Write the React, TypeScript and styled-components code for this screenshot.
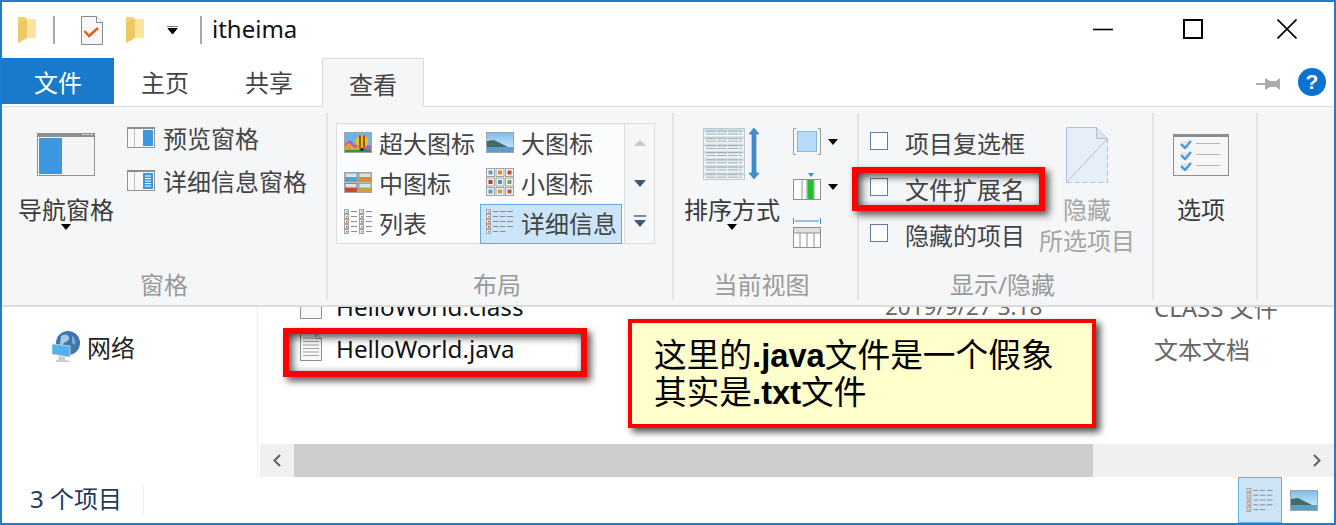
import React from "react";
import styled, { createGlobalStyle } from "styled-components";

const GlobalStyle = createGlobalStyle`
  html, body { margin: 0; padding: 0; background: #fff; overflow: hidden; }
  body { font-family: "Noto Sans", "Noto Sans CJK SC", sans-serif; }
  * { box-sizing: border-box; }
`;

const CJK = `"Noto Sans", "Noto Sans CJK SC", sans-serif`;

/* ---------- small drawings ---------- */

const Folder = () => (
  <svg width="20" height="28" viewBox="0 0 20 28">
    <path d="M1 1h7l2 2v18l-9 6z" fill="#f3d266" />
    <path d="M1 6l9-3h9v19H10l-9 5z" fill="#fbe59c" />
    <path d="M1 27l9-5V3L1 6z" fill="#eec862" />
  </svg>
);

const Checklist = () => (
  <svg width="22" height="29" viewBox="0 0 22 29">
    <path d="M.5.5h15l6 6v22H.5z" fill="#f6f6f6" stroke="#8a8a8a" />
    <path d="M15.5.5v6h6" fill="#fff" stroke="#8a8a8a" />
    <path d="M3.5 15l4.5 5 9-8" fill="none" stroke="#e8591c" strokeWidth="2.4" />
  </svg>
);

const SmallArrow = ({ w = 11, h = 8 }: { w?: number; h?: number }) => (
  <svg width={w} height={h} viewBox="0 0 11 8">
    <path d="M0 0h11M1 2.5h9L5.5 8z" stroke="#000" fill="#000" strokeWidth="1" />
  </svg>
);

const Caret = () => (
  <svg width="10" height="6" viewBox="0 0 10 6">
    <path d="M0 0h10L5 6z" fill="#000" />
  </svg>
);

const WindowGlyph = ({ kind }: { kind: "min" | "max" | "close" }) => (
  <svg width="20" height="20" viewBox="0 0 20 20">
    {kind === "min" && <path d="M0 10.5h20" stroke="#000" strokeWidth="1.6" />}
    {kind === "max" && <rect x="1" y="1" width="18" height="18" fill="none" stroke="#000" strokeWidth="2" />}
    {kind === "close" && <path d="M.5.5l19 19M19.5.5l-19 19" stroke="#000" strokeWidth="1.6" />}
  </svg>
);

const Pin = () => (
  <svg width="25" height="14" viewBox="0 0 25 14">
    <path d="M0 6h10v2H0z" fill="#a7adb1" />
    <path d="M9 1l5 3h6l4-3v12l-4-3h-6l-5 3z" fill="#a7adb1" />
  </svg>
);

const NavPaneIcon = () => (
  <svg width="58" height="43" viewBox="0 0 58 43">
    <rect x=".5" y=".5" width="57" height="42" fill="#f4f4f4" stroke="#939393" />
    <rect x="0" y="0" width="58" height="4" fill="#8e8e8e" />
    <path d="M45 1.5h3M49 1.5h3M53 1.5h3" stroke="#ddd" />
    <rect x="2" y="5" width="23" height="36" fill="#3d97e0" />
  </svg>
);

const SidePaneIcon = ({ lines }: { lines?: boolean }) => (
  <svg width="28" height="21" viewBox="0 0 28 21">
    <rect x=".5" y=".5" width="27" height="20" fill="#f8f8f8" stroke="#939393" />
    <rect x="0" y="0" width="28" height="2" fill="#8e8e8e" />
    <path d="M7.5 2v18" stroke="#bdbdbd" />
    <rect x="16" y="3" width="10" height="16" fill="#3d97e0" />
    {lines && <path d="M18 6h6M18 8.5h6M18 11h6M18 13.5h6M18 16h6" stroke="#fff" />}
  </svg>
);

const Balloon = () => (
  <svg width="28" height="21" viewBox="0 0 28 21">
    <rect x=".5" y=".5" width="27" height="20" fill="#6fb2e8" stroke="#a3a3a3" />
    <path d="M1 20V12l5-4 5 5 5-3 11 4v6z" fill="#b05fc0" />
    <path d="M1 14l4-3 6 5 4-2v6H1z" fill="#e2a13c" />
    <rect x="1" y="18" width="26" height="2" fill="#2b9a3c" />
    <circle cx="18" cy="9.5" r="6.5" fill="#e8c11c" />
    <path d="M16 3.5v12M20 3.5v12" stroke="#7a2410" strokeWidth="1.4" />
    <path d="M16.5 16h3v3h-3z" fill="#3a2410" />
  </svg>
);

const Landscape = () => (
  <svg width="28" height="21" viewBox="0 0 28 21">
    <defs>
      <linearGradient id="sky" x1="0" y1="0" x2="0" y2="1">
        <stop offset="0" stopColor="#7dbdea" />
        <stop offset="1" stopColor="#dff0fb" />
      </linearGradient>
    </defs>
    <rect x=".5" y=".5" width="27" height="20" fill="url(#sky)" stroke="#a3a3a3" />
    <path d="M1 9l7-1 6 3 8 4h5v1H1z" fill="#3e6e63" />
    <rect x="1" y="15" width="26" height="5" fill="#5a9ccb" />
  </svg>
);

const thumbColors = ["#5f9fc0", "#d98b3a", "#c84a2c", "#c23a2a", "#4f97c6", "#78a85a", "#5c9acb", "#c9a03c", "#d2502f"];

const MediumGrid = () => (
  <svg width="28" height="21" viewBox="0 0 28 21">
    {[0, 1, 2, 3].map((i) => (
      <g key={i} transform={`translate(${i % 2 ? 14.5 : 0.5} ${i > 1 ? 11 : 0.5})`}>
        <rect width="13" height="9.5" fill={thumbColors[[0, 1, 2, 7][i]]} stroke="#a3a3a3" />
        <rect x="1" y="1" width="11" height="3.5" fill="#cfe6f5" />
      </g>
    ))}
  </svg>
);

const SmallGrid = () => (
  <svg width="28" height="28" viewBox="0 0 28 28">
    {thumbColors.map((c, i) => (
      <g key={i} transform={`translate(${0.5 + (i % 3) * 9.5} ${0.5 + Math.floor(i / 3) * 9.5})`}>
        <rect width="8" height="8" fill="#eef3f6" stroke="#a3a3a3" />
        <rect x="2" y="2" width="4" height="4" fill={c} />
      </g>
    ))}
  </svg>
);

const ListIcon = () => (
  <svg width="28" height="26" viewBox="0 0 28 26">
    {[0, 1].map((col) =>
      [0, 1, 2, 3, 4].map((r) => (
        <g key={`${col}-${r}`} transform={`translate(${col * 15} ${r * 5})`}>
          <rect x=".5" y=".5" width="4" height="4" fill="#f3f3f3" stroke="#a3a3a3" />
          <rect x="2" y="2" width="1.5" height="1.5" fill={thumbColors[(r + col) % 9]} />
          <path d="M7 2.5h6" stroke="#8c8c8c" />
        </g>
      ))
    )}
  </svg>
);

const DetailsIcon = ({ h = 26 }: { h?: number }) => (
  <svg width="28" height={h} viewBox="0 0 28 26">
    {[0, 1, 2, 3, 4].map((r) => (
      <g key={r} transform={`translate(0 ${r * 5})`}>
        <rect x=".5" y=".5" width="4" height="4" fill="#f3f3f3" stroke="#a3a3a3" />
        <rect x="2" y="2" width="1.5" height="1.5" fill={thumbColors[r]} />
        {r < 4 && <path d="M7 2.5h5.5M14 2.5h5.5M21 2.5h6" stroke="#8c8c8c" />}
        {r === 4 && <path d="M7 2.5h5.5M14 2.5h5.5" stroke="#8c8c8c" />}
      </g>
    ))}
  </svg>
);

const SortIcon = () => (
  <svg width="58" height="54" viewBox="0 0 58 54">
    <rect x=".5" y=".5" width="41" height="51" fill="#f4f7f8" stroke="#b7c9d2" />
    {[0, 1, 2, 3, 4, 5, 6].map((i) => (
      <g key={i}>
        <rect x="1" y={1 + i * 7.2} width="40" height="3.5" fill="#cfe3ee" />
        <path d={`M3 ${6 + i * 7.2}h36M3 ${3 + i * 7.2}h36`} stroke="#a6a6a6" strokeDasharray="10 1" />
      </g>
    ))}
    <path d="M51 0l5 6h-3v39h3l-5 6-5-6h3V6h-3z" fill="#3f8fd2" stroke="#2b74b2" strokeWidth=".6" />
  </svg>
);

const GroupByIcon = () => (
  <svg width="28" height="27" viewBox="0 0 28 27">
    <path d="M15 0h6l-3 4z" fill="#3f8fd2" />
    <rect x=".5" y="6.5" width="27" height="20" fill="#fff" stroke="#8f8f8f" />
    <path d="M9 7v19M14 7v19M21 7v19" stroke="#8f8f8f" />
    <rect x="14.5" y="7" width="6" height="19" fill="#21c02c" />
  </svg>
);

const PreviewIcon = () => (
  <svg width="28" height="27" viewBox="0 0 28 27">
    <path d="M3 .5H.5v26H3M25 .5h2.5v26H25" fill="none" stroke="#9a9a9a" />
    <rect x="4.5" y="3.5" width="19" height="20" fill="#b7dcfb" stroke="#86b8e2" />
  </svg>
);

const ColumnsIcon = () => (
  <svg width="28" height="30" viewBox="0 0 28 30">
    <path d="M.5 0v6M27.5 0v6M2 3h24" stroke="#3f8fd2" />
    <rect x=".5" y="9.5" width="27" height="20" fill="#fff" stroke="#8f8f8f" />
    <rect x="1" y="10" width="26" height="5" fill="#dedede" />
    <path d="M7 15v14M14 15v14M21 15v14M1 15h26" stroke="#8f8f8f" />
  </svg>
);

const HideIcon = () => (
  <svg width="42" height="56" viewBox="0 0 42 56">
    <path d="M.5.5h30l11 11v44H.5z" fill="#e6eef9" />
    <path d="M41.5 11.5v44H.5" fill="none" stroke="#b3bfd0" strokeDasharray="5 3" />
    <path d="M.5 55.5V.5h30l11 11L.5 55.5" fill="none" stroke="#b3bfd0" />
    <path d="M30.5.5v11h11" fill="#dbe5f2" stroke="#b3bfd0" />
  </svg>
);

const OptionsIcon = () => (
  <svg width="56" height="42" viewBox="0 0 56 42">
    <rect x=".5" y=".5" width="55" height="41" fill="#f6f6f6" stroke="#8e8e8e" />
    <rect width="56" height="3" fill="#8e8e8e" />
    {[0, 1, 2].map((i) => (
      <g key={i} transform={`translate(0 ${i * 11})`}>
        <rect x="8" y="7" width="8" height="8" fill="#e6e6e6" />
        <path d="M8 10l4 4 6-7" fill="none" stroke="#3d97e0" strokeWidth="2.2" />
        <path d="M23 9.5h24" stroke="#b5b5b5" />
      </g>
    ))}
  </svg>
);

const NetworkIcon = () => (
  <svg width="28" height="32" viewBox="0 0 28 32">
    <circle cx="16" cy="12" r="12" fill="#3f76ad" />
    <path d="M9 5c5-3 9 0 8 3s-6 3-6 6-3 2-3-1z" fill="#a9cbe6" />
    <path d="M20 5c3 1 4 6 3 9l-3-2z" fill="#7fa9cc" />
    <path d="M0 13l18 2v11L0 23z" fill="#52b2ee" stroke="#c5c9cc" />
    <path d="M6 25l7 1v3l5 1v1H4v-2l3-1z" fill="#c9cdd0" />
  </svg>
);

const DocumentIcon = ({ plain }: { plain?: boolean }) => (
  <svg width="22" height="29" viewBox="0 0 22 29">
    <path d="M.5.5h15l6 6v22H.5z" fill="#f8f8f8" stroke="#8f8f8f" />
    <path d="M15.5.5v6h6" fill="#e4e4e4" stroke="#8f8f8f" />
    {!plain && (
      <path d="M3 6h11M3 9.5h16M3 13h16M3 16.5h16M3 20h16M3 23.5h16" stroke="#a3a3a3" />
    )}
  </svg>
);

const ScrollChevron = ({ right }: { right?: boolean }) => (
  <svg width="8" height="13" viewBox="0 0 8 13">
    <path d={right ? "M1 1l5.5 5.5L1 12" : "M7 1L1.5 6.5 7 12"} fill="none" stroke="#606060" strokeWidth="2" />
  </svg>
);

const GalleryArrow = ({ dir, off }: { dir: "up" | "down" | "more"; off?: boolean }) => (
  <svg width="14" height="14" viewBox="0 0 14 14">
    {dir === "more" && <path d="M1 1h12" stroke="#3f5675" strokeWidth="1.4" />}
    <path
      d={dir === "up" ? "M7 3l6 6H1z" : dir === "more" ? "M1 5h12l-6 7z" : "M1 4h12l-6 7z"}
      fill={off ? "#c5cad0" : "#3f5675"}
    />
  </svg>
);

/* ---------- window frame ---------- */

const Page = styled.div`
  position: relative;
  width: 1336px;
  height: 525px;
  overflow: hidden;
`;

const Frame = styled.div`
  display: flex;
  flex-direction: column;
  width: 1336px;
  height: 525px;
  border: 2px solid #1a7fd2;
  background: #fff;
  font-family: ${CJK};
  color: #444;
`;

const TitleBar = styled.div`
  display: flex;
  align-items: center;
  height: 56px;
  flex: none;
`;

const QuickSlot = styled.div<{ $w: number; $pad: number }>`
  display: flex;
  justify-content: flex-start;
  width: ${(p) => p.$w}px;
  padding-left: ${(p) => p.$pad}px;
  flex: none;
`;

const TitleSep = styled.div`
  width: 2px;
  height: 28px;
  background: #a8a8a8;
  flex: none;
`;

const WindowTitle = styled.div`
  margin-left: 10px;
  margin-top: -3px;
  font-size: 24px;
  line-height: 30px;
  color: #111;
  flex: 1;
`;

const ControlButton = styled.div<{ $w: number }>`
  display: flex;
  justify-content: center;
  width: ${(p) => p.$w}px;
  margin-top: -3px;
  flex: none;
`;

const TabRow = styled.div`
  display: flex;
  align-items: flex-start;
  height: 49px;
  flex: none;
  border-bottom: 1px solid #dadbdc;
`;

const FileTab = styled.div`
  display: flex;
  align-items: center;
  justify-content: center;
  width: 112px;
  height: 46px;
  background: #1979ca;
  color: #fff;
  font-size: 24px;
`;

const Tab = styled.div<{ $w: number; $active?: boolean }>`
  display: flex;
  align-items: center;
  justify-content: center;
  width: ${(p) => p.$w}px;
  height: ${(p) => (p.$active ? "49px" : "46px")};
  padding-top: ${(p) => (p.$active ? "1px" : "0")};
  font-size: 24px;
  color: #444;
  ${(p) => p.$active && "background: #f5f6f7; border: 1px solid #dadbdc; border-bottom: none;"}
`;

const TabSpacer = styled.div`
  flex: 1;
`;

const HelpBadge = styled.div`
  display: flex;
  align-items: center;
  justify-content: center;
  width: 28px;
  height: 28px;
  margin: 10px 8px 0 17px;
  border-radius: 50%;
  background: #0a73d1;
  color: #fff;
  font: bold 21px "Liberation Sans", sans-serif;
`;

const PinWrap = styled.div`
  margin-top: 16px;
`;

/* ---------- ribbon ---------- */

const Ribbon = styled.div`
  display: flex;
  height: 200px;
  flex: none;
  padding: 6px 0 0;
  background: #f5f6f7;
  border-bottom: 2px solid #dcdcdc;
`;

const Group = styled.div<{ $w: number }>`
  display: flex;
  flex-direction: column;
  width: ${(p) => p.$w}px;
  height: 187px;
  flex: none;
  border-right: 2px solid #e3e4e6;
`;

const GroupBody = styled.div`
  display: flex;
  flex: 1;
  min-height: 0;
`;

const GroupLabel = styled.div<{ $nudge?: number }>`
  height: 30px;
  padding-right: ${(p) => p.$nudge ?? 0}px;
  text-align: center;
  font-size: 24px;
  line-height: 30px;
  color: #9a9a9a;
  flex: none;
`;

const BigButton = styled.div<{ $w: number; $left?: number; $muted?: boolean }>`
  display: flex;
  flex-direction: column;
  align-items: center;
  width: ${(p) => p.$w}px;
  margin-left: ${(p) => p.$left ?? 0}px;
  flex: none;
  font-size: 24px;
  line-height: 31px;
  white-space: nowrap;
  text-align: center;
  color: ${(p) => (p.$muted ? "#a5a5a5" : "#3a3a3a")};
`;

const BigIconSlot = styled.div<{ $top: number }>`
  display: flex;
  justify-content: center;
  align-items: flex-start;
  padding-top: ${(p) => p.$top}px;
  height: 81px;
  flex: none;
`;

const CaretSlot = styled.div`
  display: flex;
  justify-content: center;
  height: 6px;
  margin-top: -1px;
`;

const PaneList = styled.div`
  display: flex;
  flex-direction: column;
  gap: 17px;
  margin: 11px 0 0 5px;
`;

const PaneRow = styled.div`
  display: flex;
  align-items: center;
  gap: 8px;
  height: 26px;
  font-size: 24px;
  color: #444;
`;

const Gallery = styled.div`
  display: flex;
  width: 319px;
  height: 121px;
  margin: 10px 0 0 8px;
  border: 1px solid #dcdcdc;
  background: #fbfcfe;
`;

const GalleryGrid = styled.div`
  display: grid;
  grid-template-columns: 142px 142px;
  grid-auto-rows: 40px;
  width: 288px;
  padding-left: 1px;
  border-right: 1px solid #dcdcdc;
`;

const GalleryItem = styled.div<{ $selected?: boolean }>`
  display: flex;
  align-items: center;
  gap: 7px;
  padding: 0 0 4px 6px;
  font-size: 24px;
  white-space: nowrap;
  color: #444;
  ${(p) => p.$selected && "background: #cde5fb; border: 1px solid #68a8e2; padding-left: 5px;"}
`;

const GalleryRail = styled.div`
  display: flex;
  flex-direction: column;
  align-items: center;
  flex: 1;
  padding-top: 13px;
  gap: 25px;
  background: #f5f6f7;
`;

const SmallIconColumn = styled.div`
  display: flex;
  flex-direction: column;
  gap: 18px;
  margin: 15px 0 0 9px;
`;

const SmallIconRow = styled.div`
  display: flex;
  align-items: center;
  gap: 7px;
`;

const CheckList = styled.div`
  display: flex;
  flex-direction: column;
  margin: 5px 0 0 11px;
  width: 173px;
  flex: none;
`;

const CheckRow = styled.div`
  display: flex;
  align-items: center;
  gap: 17px;
  height: 46px;
  font-size: 24px;
  color: #444;
`;

const CheckBox = styled.span`
  width: 18px;
  height: 18px;
  background: #fff;
  border: 1px solid #5f7ba3;
  flex: none;
`;

const CheckLabel = styled.span`
  padding-top: 3px;
`;

/* ---------- file list ---------- */

const Content = styled.div`
  display: flex;
  flex: 1;
  min-height: 0;
`;

const NavPane = styled.div`
  width: 256px;
  flex: none;
  border-right: 1px solid #f0f0f0;
  padding: 22px 0 0 50px;
`;

const NavItem = styled.div`
  display: flex;
  align-items: center;
  gap: 7px;
  font-size: 24px;
  color: #222;
`;

const FilePane = styled.div`
  display: flex;
  flex-direction: column;
  flex: 1;
  min-width: 0;
  padding-left: 2px;
`;

const FileRows = styled.div`
  flex: 1;
  overflow: hidden;
`;

const FileRow = styled.div<{ $clipped?: boolean }>`
  display: flex;
  align-items: center;
  height: 42px;
  margin-top: ${(p) => (p.$clipped ? "-22px" : "0")};
  white-space: nowrap;
`;

const FileIconSlot = styled.div`
  display: flex;
  width: 76px;
  margin-top: -4px;
  padding-left: 40px;
  flex: none;
`;

const FileName = styled.div`
  width: 549px;
  font-size: 24.2px;
  color: #111;
  flex: none;
`;

const FileDate = styled.div`
  width: 269px;
  font-size: 22.5px;
  color: #666;
  flex: none;
`;

const FileType = styled.div`
  font-size: 24px;
  color: #666;
`;

const HScroll = styled.div`
  display: flex;
  height: 33px;
  flex: none;
  background: #f0f0f0;
`;

const ScrollButton = styled.div`
  display: flex;
  align-items: center;
  justify-content: center;
  width: 34px;
  flex: none;
`;

const ScrollThumb = styled.div`
  width: 799px;
  background: #cdcdcd;
  flex: none;
`;

const ScrollTrack = styled.div`
  flex: 1;
`;

const StatusBar = styled.div`
  display: flex;
  align-items: center;
  height: 46px;
  flex: none;
  padding-right: 8px;
`;

const StatusText = styled.div`
  width: 142px;
  height: 32px;
  padding-left: 28px;
  font-size: 24px;
  line-height: 30px;
  color: #1e395b;
  border-right: 1px solid #f0f0f0;
  flex: none;
`;

const StatusSpacer = styled.div`
  flex: 1;
`;

const ViewToggle = styled.div<{ $on?: boolean }>`
  display: flex;
  align-items: center;
  justify-content: center;
  width: 44px;
  height: 46px;
  flex: none;
  ${(p) => p.$on && "background: #cce4f7; border: 1px solid #5fb2ea;"}
`;

/* ---------- annotations laid over the screenshot ---------- */

const RedFrame = styled.div<{ $x: number; $y: number; $w: number; $h: number }>`
  position: absolute;
  left: ${(p) => p.$x}px;
  top: ${(p) => p.$y}px;
  width: ${(p) => p.$w}px;
  height: ${(p) => p.$h}px;
  border: 6px solid #ff0000;
  box-shadow: 4px 4px 7px rgba(0, 0, 0, 0.65), inset 3px 3px 8px rgba(0, 0, 0, 0.75);
`;

const Callout = styled.div`
  position: absolute;
  left: 628px;
  top: 319px;
  width: 468px;
  height: 109px;
  padding: 14px 0 0 22px;
  background: #ffffcc;
  border: 4px solid #ff0000;
  box-shadow: 4px 4px 7px rgba(0, 0, 0, 0.7);
  font-family: "Liberation Sans", "Noto Sans CJK SC", sans-serif;
  font-size: 32.7px;
  line-height: 37px;
  color: #000;
  white-space: nowrap;
  b {
    font-weight: 700;
  }
`;

export default function App() {
  return (
    <Page>
      <GlobalStyle />
      <Frame>
        <TitleBar>
          <QuickSlot $w={51} $pad={15}><Folder /></QuickSlot>
          <TitleSep />
          <QuickSlot $w={70} $pad={26}><Checklist /></QuickSlot>
          <QuickSlot $w={41} $pad={0}><Folder /></QuickSlot>
          <QuickSlot $w={34} $pad={1}><SmallArrow /></QuickSlot>
          <TitleSep />
          <WindowTitle>itheima</WindowTitle>
          <ControlButton $w={86}><WindowGlyph kind="min" /></ControlButton>
          <ControlButton $w={94}><WindowGlyph kind="max" /></ControlButton>
          <ControlButton $w={94}><WindowGlyph kind="close" /></ControlButton>
        </TitleBar>

        <TabRow>
          <FileTab>文件</FileTab>
          <Tab $w={102}>主页</Tab>
          <Tab $w={106}>共享</Tab>
          <Tab $w={102} $active>查看</Tab>
          <TabSpacer />
          <PinWrap><Pin /></PinWrap>
          <HelpBadge>?</HelpBadge>
        </TabRow>

        <Ribbon>
          <Group $w={326}>
            <GroupBody>
              <BigButton $w={112} $left={8}>
                <BigIconSlot $top={20}><NavPaneIcon /></BigIconSlot>
                导航窗格
                <CaretSlot><Caret /></CaretSlot>
              </BigButton>
              <PaneList>
                <PaneRow><SidePaneIcon />预览窗格</PaneRow>
                <PaneRow><SidePaneIcon lines />详细信息窗格</PaneRow>
              </PaneList>
            </GroupBody>
            <GroupLabel>窗格</GroupLabel>
          </Group>

          <Group $w={346}>
            <GroupBody>
              <Gallery>
                <GalleryGrid>
                  <GalleryItem><Balloon />超大图标</GalleryItem>
                  <GalleryItem><Landscape />大图标</GalleryItem>
                  <GalleryItem><MediumGrid />中图标</GalleryItem>
                  <GalleryItem><SmallGrid />小图标</GalleryItem>
                  <GalleryItem><ListIcon />列表</GalleryItem>
                  <GalleryItem $selected><DetailsIcon />详细信息</GalleryItem>
                </GalleryGrid>
                <GalleryRail>
                  <GalleryArrow dir="up" off />
                  <GalleryArrow dir="down" />
                  <GalleryArrow dir="more" />
                </GalleryRail>
              </Gallery>
            </GroupBody>
            <GroupLabel $nudge={6}>布局</GroupLabel>
          </Group>

          <Group $w={185}>
            <GroupBody>
              <BigButton $w={104} $left={6}>
                <BigIconSlot $top={15}><SortIcon /></BigIconSlot>
                排序方式
                <CaretSlot><Caret /></CaretSlot>
              </BigButton>
              <SmallIconColumn>
                <SmallIconRow><PreviewIcon /><Caret /></SmallIconRow>
                <SmallIconRow><GroupByIcon /><Caret /></SmallIconRow>
                <SmallIconRow><ColumnsIcon /></SmallIconRow>
              </SmallIconColumn>
            </GroupBody>
            <GroupLabel $nudge={8}>当前视图</GroupLabel>
          </Group>

          <Group $w={295}>
            <GroupBody>
              <CheckList>
                <CheckRow><CheckBox /><CheckLabel>项目复选框</CheckLabel></CheckRow>
                <CheckRow><CheckBox /><CheckLabel>文件扩展名</CheckLabel></CheckRow>
                <CheckRow><CheckBox /><CheckLabel>隐藏的项目</CheckLabel></CheckRow>
              </CheckList>
              <BigButton $w={88} $muted>
                <BigIconSlot $top={14}><HideIcon /></BigIconSlot>
                隐藏
                <br />
                所选项目
              </BigButton>
            </GroupBody>
            <GroupLabel $nudge={6}>显示/隐藏</GroupLabel>
          </Group>

          <Group $w={104}>
            <GroupBody>
              <BigButton $w={94}>
                <BigIconSlot $top={21}><OptionsIcon /></BigIconSlot>
                选项
              </BigButton>
            </GroupBody>
          </Group>
        </Ribbon>

        <Content>
          <NavPane>
            <NavItem><NetworkIcon />网络</NavItem>
          </NavPane>
          <FilePane>
            <FileRows>
              <FileRow $clipped>
                <FileIconSlot><DocumentIcon plain /></FileIconSlot>
                <FileName>HelloWorld.class</FileName>
                <FileDate>2019/9/27 3:18</FileDate>
                <FileType>CLASS 文件</FileType>
              </FileRow>
              <FileRow>
                <FileIconSlot><DocumentIcon /></FileIconSlot>
                <FileName>HelloWorld.java</FileName>
                <FileDate />
                <FileType>文本文档</FileType>
              </FileRow>
            </FileRows>
            <HScroll>
              <ScrollButton><ScrollChevron /></ScrollButton>
              <ScrollThumb />
              <ScrollTrack />
              <ScrollButton><ScrollChevron right /></ScrollButton>
            </HScroll>
          </FilePane>
        </Content>

        <StatusBar>
          <StatusText>3 个项目</StatusText>
          <StatusSpacer />
          <ViewToggle $on><DetailsIcon h={25} /></ViewToggle>
          <ViewToggle><Landscape /></ViewToggle>
        </StatusBar>
      </Frame>

      <RedFrame $x={852} $y={167} $w={193} $h={44} />
      <RedFrame $x={283} $y={328} $w={304} $h={49} />
      <Callout>
        这里的<b>.java</b>文件是一个假象
        <br />
        其实是<b>.txt</b>文件
      </Callout>
    </Page>
  );
}
